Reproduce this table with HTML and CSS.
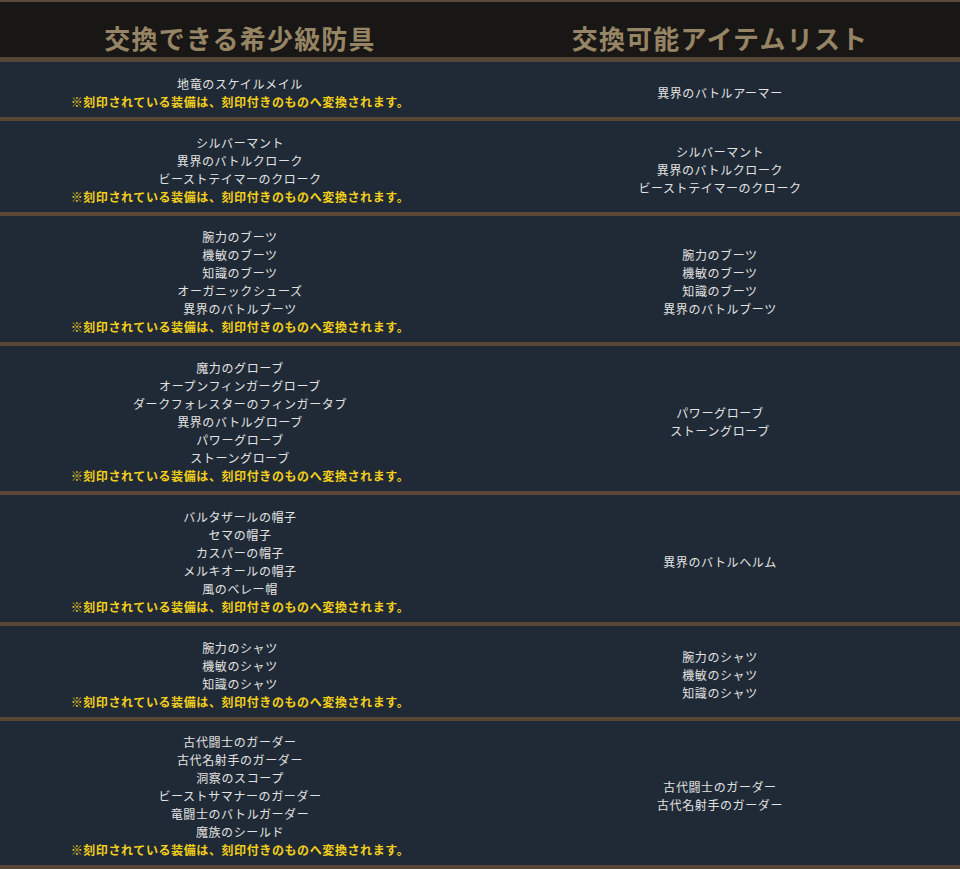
FILE: index.html
```html
<!DOCTYPE html>
<html lang="ja">
<head>
<meta charset="utf-8">
<link rel="stylesheet" href="styles.css">
</head>
<body>
<table class="exchange">
  <thead>
    <tr>
      <th>交換できる希少級防具</th>
      <th>交換可能アイテムリスト</th>
    </tr>
  </thead>
  <tbody>
    <tr>
      <td>地竜のスケイルメイル<br><span class="note">※刻印されている装備は、刻印付きのものへ変換されます。</span></td>
      <td>異界のバトルアーマー</td>
    </tr>
    <tr>
      <td>シルバーマント<br>異界のバトルクローク<br>ビーストテイマーのクローク<br><span class="note">※刻印されている装備は、刻印付きのものへ変換されます。</span></td>
      <td>シルバーマント<br>異界のバトルクローク<br>ビーストテイマーのクローク</td>
    </tr>
    <tr>
      <td>腕力のブーツ<br>機敏のブーツ<br>知識のブーツ<br>オーガニックシューズ<br>異界のバトルブーツ<br><span class="note">※刻印されている装備は、刻印付きのものへ変換されます。</span></td>
      <td>腕力のブーツ<br>機敏のブーツ<br>知識のブーツ<br>異界のバトルブーツ</td>
    </tr>
    <tr>
      <td>魔力のグローブ<br>オープンフィンガーグローブ<br>ダークフォレスターのフィンガータブ<br>異界のバトルグローブ<br>パワーグローブ<br>ストーングローブ<br><span class="note">※刻印されている装備は、刻印付きのものへ変換されます。</span></td>
      <td>パワーグローブ<br>ストーングローブ</td>
    </tr>
    <tr>
      <td>バルタザールの帽子<br>セマの帽子<br>カスパーの帽子<br>メルキオールの帽子<br>風のベレー帽<br><span class="note">※刻印されている装備は、刻印付きのものへ変換されます。</span></td>
      <td>異界のバトルヘルム</td>
    </tr>
    <tr>
      <td>腕力のシャツ<br>機敏のシャツ<br>知識のシャツ<br><span class="note">※刻印されている装備は、刻印付きのものへ変換されます。</span></td>
      <td>腕力のシャツ<br>機敏のシャツ<br>知識のシャツ</td>
    </tr>
    <tr>
      <td>古代闘士のガーダー<br>古代名射手のガーダー<br>洞察のスコープ<br>ビーストサマナーのガーダー<br>竜闘士のバトルガーダー<br>魔族のシールド<br><span class="note">※刻印されている装備は、刻印付きのものへ変換されます。</span></td>
      <td>古代闘士のガーダー<br>古代名射手のガーダー</td>
    </tr>
  </tbody>
</table>
</body>
</html>
```
FILE: styles.css
```css
html, body {
  margin: 0;
  padding: 0;
  background: #202a36;
}
body {
  font-family: "Noto Sans CJK JP", "Noto Sans", sans-serif;
  font-size: 12px;
  line-height: 18px;
  color: #e2e2e2;
}
.exchange {
  width: 960px;
  border-collapse: collapse;
  table-layout: fixed;
}
.exchange th {
  width: 50%;
  background: #191616;
  color: #968564;
  font-size: 26px;
  font-weight: bold;
  line-height: 30px;
  letter-spacing: 1.2px;
  padding: 21px 0 4px;
  border-top: 2px solid #594a3b;
  border-bottom: 5px solid #564535;
  text-align: center;
}
.exchange td {
  background: #202a36;
  text-align: center;
  vertical-align: middle;
  letter-spacing: 0.6px;
  padding: 12.75px 0 6px;
  border-bottom: 4px solid #5b4735;
}
.note {
  color: #f2cf1b;
  font-weight: bold;
}
```
